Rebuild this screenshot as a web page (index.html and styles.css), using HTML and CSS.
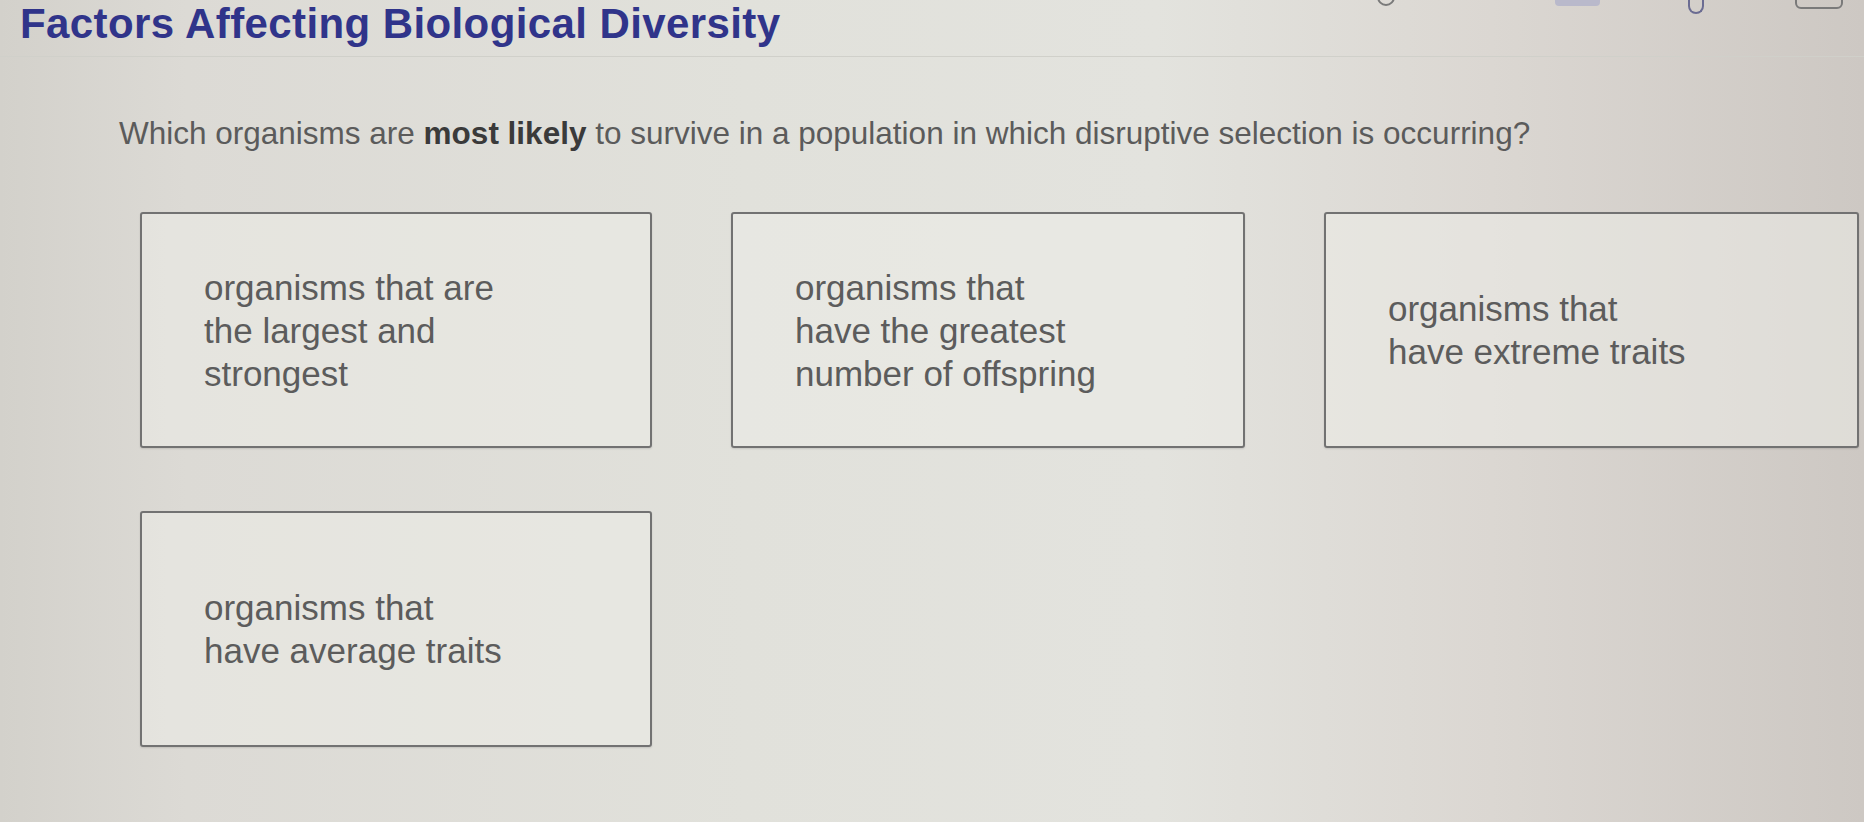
FILE: index.html
```html
<!DOCTYPE html>
<html lang="en">
<head>
<meta charset="utf-8">
<title>Factors Affecting Biological Diversity</title>
<link rel="stylesheet" href="styles.css">
</head>
<body>
<header class="topbar">
  <h1 class="title">Factors Affecting Biological Diversity</h1>
  <div class="tools">
    <span class="tool tool-circle"></span>
    <span class="tool tool-tab"></span>
    <span class="tool tool-pin"></span>
    <span class="tool tool-box"></span>
  </div>
</header>
<main class="content">
  <p class="question">Which organisms are <strong>most likely</strong> to survive in a population in which disruptive selection is occurring?</p>
  <div class="answers">
    <div class="answer"><span>organisms that are<br>the largest and<br>strongest</span></div>
    <div class="answer"><span>organisms that<br>have the greatest<br>number of offspring</span></div>
    <div class="answer"><span>organisms that<br>have extreme traits</span></div>
    <div class="answer"><span>organisms that<br>have average traits</span></div>
  </div>
</main>
</body>
</html>
```
FILE: styles.css
```css
html, body {
  margin: 0;
  padding: 0;
}
body {
  width: 1864px;
  height: 822px;
  overflow: hidden;
  font-family: "Liberation Sans", Arial, sans-serif;
  background: linear-gradient(90deg, #d3d1cb 0%, #dcdad5 10%, #e1e1db 40%, #e3e3de 62%, #dbd7d2 80%, #cdc8c3 100%);
}
.topbar {
  display: flex;
  align-items: flex-start;
  height: 56px;
  border-bottom: 1px solid #d0d0ca;
}
.title {
  margin: 0 0 0 20px;
  font-size: 42px;
  line-height: 47px;
  font-weight: bold;
  letter-spacing: 0.4px;
  color: #30348a;
  white-space: nowrap;
}
.tools {
  margin-left: auto;
  padding-right: 21px;
  display: flex;
  align-items: flex-start;
}
.tool {
  display: block;
  box-sizing: border-box;
}
.tool-circle {
  width: 18px;
  height: 18px;
  margin-top: -12px;
  border: 2px solid #7a7a7a;
  border-radius: 50%;
}
.tool-tab {
  width: 45px;
  height: 6px;
  margin-left: 160px;
  background: #b9b9cb;
  border-radius: 0 0 4px 4px;
}
.tool-pin {
  width: 16px;
  height: 14px;
  margin-left: 88px;
  border: 2px solid #6b6c92;
  border-top: none;
  border-radius: 0 0 8px 8px;
}
.tool-box {
  width: 48px;
  height: 20px;
  margin-left: 91px;
  margin-top: -11px;
  border: 2px solid #7a7a7a;
  border-radius: 6px;
}
.content {
  padding-left: 119px;
}
.question {
  margin: 56px 0 0 0;
  font-size: 31.5px;
  line-height: 40px;
  color: #5b5b5b;
  white-space: nowrap;
}
.question strong {
  color: #3a3a3a;
  font-weight: bold;
}
.answers {
  margin: 59px 0 0 21px;
  display: grid;
  grid-template-columns: 512px 514px 535px;
  column-gap: 79px;
  row-gap: 63px;
}
.answer {
  box-sizing: border-box;
  height: 236px;
  display: flex;
  align-items: center;
  padding-left: 62px;
  border: 2px solid #727272;
  border-radius: 3px;
  background: rgba(236, 236, 231, 0.55);
  box-shadow: 0 1px 2px rgba(0, 0, 0, 0.12);
  font-size: 35px;
  line-height: 43px;
  color: #5c5c5c;
}
```
